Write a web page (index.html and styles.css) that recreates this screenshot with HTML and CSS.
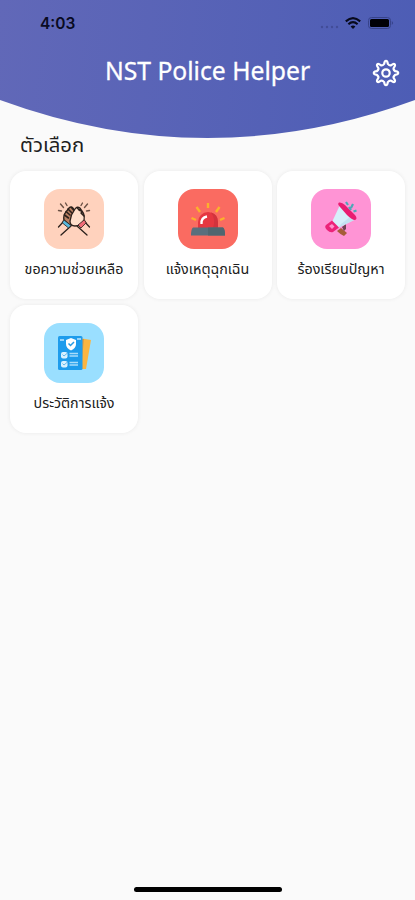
FILE: index.html
```html
<!DOCTYPE html>
<html lang="th">
<head>
    <meta charset="UTF-8">
    <meta name="viewport" content="width=device-width, initial-scale=1.0">
    <title>NST Police Helper</title>
    <link rel="stylesheet" href="styles.css">
</head>
<body>
    <div class="app">
        <header class="header">
            <div class="status-bar">
                <span class="time">4:03</span>
                <div class="status-icons">
                    <svg class="signal" width="19" height="4" viewBox="0 0 19 4">
                        <g fill="#424d98">
                            <circle cx="2" cy="2" r="1.2"/>
                            <circle cx="7" cy="2" r="1.2"/>
                            <circle cx="12" cy="2" r="1.2"/>
                            <circle cx="17" cy="2" r="1.2"/>
                        </g>
                    </svg>
                    <svg class="wifi" width="16" height="12" viewBox="0 0 16 12" fill="none" stroke="#080a1c" stroke-width="2.1">
                        <path d="M0.8 4.4Q8 -2 15.2 4.4"/>
                        <path d="M3.4 7.2Q8 3 12.6 7.2"/>
                        <path d="M8 12L5.6 9.4Q8 7.4 10.4 9.4Z" fill="#080a1c" stroke="none"/>
                    </svg>
                    <svg class="battery" width="26" height="12" viewBox="0 0 26 12">
                        <rect x="0.5" y="0.5" width="22" height="11" rx="3" fill="none" stroke="#37438a"/>
                        <rect x="2" y="2" width="19" height="8" rx="1.5" fill="#000007"/>
                        <path d="M23.8 4Q26.4 6 23.8 8Z" fill="#37438a"/>
                    </svg>
                </div>
            </div>
            <div class="title-bar">
                <h1 class="title">NST Police Helper</h1>
                <button type="button" class="settings" aria-label="Settings">
                    <svg width="28" height="28" viewBox="0 0 28 28" fill="none" stroke="#fff" stroke-width="2.2" stroke-linejoin="round">
                        <path d="M12.2 4.9Q12.5 1.8 14 1.8Q15.5 1.8 15.8 4.9Q17.6 7 19.1 6.3Q21.6 4.3 22.7 5.3Q23.7 6.4 21.7 8.9Q21 10.4 23.1 12.2Q26.2 12.5 26.2 14Q26.2 15.5 23.1 15.8Q21 17.6 21.7 19.1Q23.7 21.6 22.7 22.7Q21.6 23.7 19.1 21.7Q17.6 21 15.8 23.1Q15.5 26.2 14 26.2Q12.5 26.2 12.2 23.1Q10.4 21 8.9 21.7Q6.4 23.7 5.3 22.7Q4.3 21.6 6.3 19.1Q7 17.6 4.9 15.8Q1.8 15.5 1.8 14Q1.8 12.5 4.9 12.2Q7 10.4 6.3 8.9Q4.3 6.4 5.3 5.3Q6.4 4.3 8.9 6.3Q10.4 7 12.2 4.9Z"/>
                        <circle cx="14" cy="14" r="3.7"/>
                    </svg>
                </button>
            </div>
        </header>

        <main class="content">
            <h2 class="section-title">ตัวเลือก</h2>
            <div class="menu">
                <!-- Ask for help -->
                <a class="card">
                    <div class="icon icon-help">
                        <svg width="60" height="60" viewBox="0 0 60 60" fill="none" stroke="#2c211c" stroke-width="1.3" stroke-linecap="round" stroke-linejoin="round">
                            <path d="M14.5 38L20 32M17 46L27 37M45.5 38L40 32M43 46L33 37"/>
                            <path d="M20 31Q19 26 22 23L25 19Q27 17 29 19L33 25L29 36H26Z" fill="#b98063"/>
                            <path d="M22 22.5L26 26M24 20L28 24M20.5 26L24.5 29M27.5 18.5L30 21.5" stroke-width="1.6"/>
                            <path d="M26 32L27.5 26L31 20Q33 17 36 19L38 22Q41 26 40 31Q37 37 31 37Q26 37 26 32Z" fill="#ffdfcb"/>
                            <path d="M33 18.5L35.5 21.5M36 20L38 24M37 24L40 27" stroke-width="1.5"/>
                            <path d="M20 31L27 36.5L24.5 39L18.5 34Z" fill="#58b8dc" stroke-width="0.8"/>
                            <path d="M40 31L34 36L37 39L42 34Z" fill="#ef6c78" stroke-width="0.8"/>
                            <path d="M16.5 15L19.5 18.5M21.5 14L23 16.5M14.5 21.5L17.5 22M43.5 15L40.5 18.5M38.5 14L37 16.5M45.5 21.5L42.5 22" stroke="#6b5145" stroke-width="1.4"/>
                        </svg>
                    </div>
                    <span class="label">ขอความช่วยเหลือ</span>
                </a>

                <!-- Emergency -->
                <a class="card">
                    <div class="icon icon-emergency">
                        <svg width="60" height="60" viewBox="0 0 60 60">
                            <path d="M30 14V19M18.5 18L22 23M41.5 18L38 23M13.5 29L18 31M46.5 29L42 31" stroke="#fbb12c" stroke-width="2.4"/>
                            <path d="M20 39V33A10 10 0 0 1 40 33V39Z" fill="#e53740"/>
                            <path d="M33 23.5Q40 25 40 33V39H35Q38 30 33 23.5Z" fill="#d2333d"/>
                            <path d="M23.5 35Q23 28.5 29 27.5" fill="none" stroke="#fff" stroke-width="2.3"/>
                            <path d="M15 38.5H45Q47 40 47 46.5H13Q13 40 15 38.5Z" fill="#596f7d"/>
                            <path d="M30 38.5H45Q47 40 47 46.5H30Z" fill="#50666f"/>
                        </svg>
                    </div>
                    <span class="label">แจ้งเหตุฉุกเฉิน</span>
                </a>

                <!-- Complaint -->
                <a class="card">
                    <div class="icon icon-complaint">
                        <svg width="60" height="60" viewBox="0 0 60 60">
                            <path d="M26 42L30 39L36 44L33 47Q30 46 26 42Z" fill="#a65c38"/>
                            <path d="M31 38L35 35L35 40L33 42Z" fill="#704253"/>
                            <path d="M21 33L29 16L43 31L27 39Z" fill="#d6effa"/>
                            <path d="M30 35L39 28L43 31L27 39Z" fill="#c3e2f1"/>
                            <path d="M28 13.5Q31 13 34 16L44 26Q47 30 44 31Q41 31 36 26L29 18Q26 15 28 13.5Z" fill="#e91c71"/>
                            <path d="M15 36L21 31.5L28 38.5L22 43Q19 44 16 41Q13 38 15 36Z" fill="#ec2379"/>
                            <path d="M18 37L21 35L23.5 37.5L21 40Z" fill="#ff92cc"/>
                            <path d="M35 13L37 16M42 15L40 19M45.5 21.5L42.5 22.5M38 18L40 21" stroke="#4da8b7" stroke-width="2.2"/>
                        </svg>
                    </div>
                    <span class="label">ร้องเรียนปัญหา</span>
                </a>

                <!-- Report history -->
                <a class="card">
                    <div class="icon icon-history">
                        <svg width="60" height="60" viewBox="0 0 60 60">
                            <path d="M35 15L47 17L42 46H35Z" fill="#fbb541"/>
                            <path d="M37 16L40 16L37 46H35Z" fill="#d89a45"/>
                            <rect x="14" y="13" width="24.5" height="34" rx="1.5" fill="#1e9cec"/>
                            <path d="M16 17H20M33 16H37" stroke="#bce5ff" stroke-width="1.6"/>
                            <path d="M27 15L32 17V21Q32 25 27 27.5Q22 25 22 21V17Z" fill="#fff"/>
                            <path d="M24.5 20.5L26.5 22.5L30 19" fill="none" stroke="#279be3" stroke-width="1.5"/>
                            <rect x="17" y="29" width="6.5" height="6.5" rx="2" fill="#d9f1ff"/>
                            <rect x="17" y="38" width="6.5" height="6.5" rx="2" fill="#d9f1ff"/>
                            <path d="M18.5 31.5L20 33L23.5 30M18.5 40.5L20 42L23.5 39" fill="none" stroke="#65b7ea"/>
                            <path d="M25.5 30.5H34M25.5 33H34M25.5 39.5H34M25.5 42H34" stroke="#a8dcfa" stroke-width="1.7"/>
                        </svg>
                    </div>
                    <span class="label">ประวัติการแจ้ง</span>
                </a>
            </div>
        </main>

        <footer class="footer">
            <div class="home-indicator"></div>
        </footer>
    </div>
</body>
</html>
```

FILE: styles.css
```css
* {
    box-sizing: border-box;
}

body {
    margin: 0;
    background: #fafafa;
    font-family: "Noto Sans", "Noto Sans Thai", sans-serif;
    color: #202020;
}

.app {
    display: flex;
    flex-direction: column;
    width: 415px;
    height: 900px;
    overflow: hidden;
}

.header {
    flex: none;
    height: 138px;
    background: linear-gradient(95deg, #6168b8, #4d5db5);
    clip-path: path('M0 0H415V100Q207.5 176 0 100Z');
}

.status-bar {
    display: flex;
    justify-content: space-between;
    align-items: center;
    height: 46px;
    padding: 0 21px 0 40px;
}

.time {
    font-family: Inter, sans-serif;
    font-size: 15.5px;
    font-weight: 600;
    color: #090b22;
}

.status-icons {
    display: flex;
    align-items: center;
}

.signal {
    margin: 7px 6px 0 0;
}

.wifi {
    margin-right: 7px;
}

.title-bar {
    display: grid;
    grid-template-columns: 1fr auto 1fr;
    align-items: center;
    height: 54px;
    padding: 0 15px;
}

.title {
    grid-column: 2;
    margin: -4px 0 0;
    font-family: "Noto Sans", sans-serif;
    font-size: 24.7px;
    font-weight: 400;
    line-height: 32px;
    color: #fff;
    -webkit-text-stroke: 0.3px #fff;
}

.settings {
    display: flex;
    justify-self: end;
    padding: 0;
    border: none;
    background: none;
    cursor: pointer;
}

.content {
    flex: 1;
    padding: 0 10px;
}

.section-title {
    margin: -9px 0 0 10px;
    font-size: 20.3px;
    font-weight: 400;
    line-height: 30px;
}

.menu {
    display: grid;
    grid-template-columns: repeat(3, 128px);
    gap: 5.5px;
    margin-top: 12px;
}

.card {
    display: flex;
    flex-direction: column;
    align-items: center;
    height: 128px;
    padding-top: 18px;
    border-radius: 16px;
    background: #fff;
    box-shadow: 0 0 4px rgba(0, 0, 0, 0.07);
}

.icon {
    width: 60px;
    height: 60px;
    border-radius: 16px;
}

.icon svg {
    display: block;
}

.icon-help {
    background: #ffd2bd;
}

.icon-emergency {
    background: #fa6b61;
}

.icon-complaint {
    background: #ff94d5;
}

.icon-history {
    background: #9adfff;
}

.label {
    margin-top: 8px;
    font-size: 14.3px;
    line-height: 24px;
    white-space: nowrap;
}

.footer {
    display: flex;
    justify-content: center;
    height: 13px;
}

.home-indicator {
    width: 148px;
    height: 5px;
    border-radius: 3px;
    background: #000;
}
```
